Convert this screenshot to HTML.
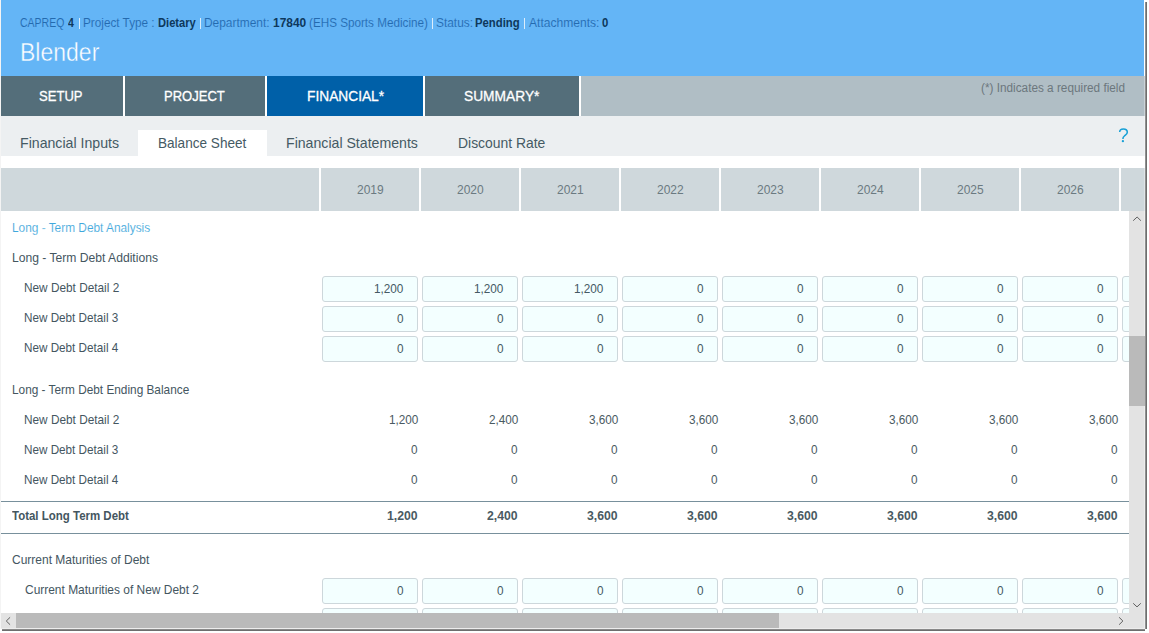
<!DOCTYPE html>
<html><head><meta charset="utf-8">
<style>
html,body{margin:0;padding:0;}
body{width:1149px;height:633px;background:#fff;position:relative;overflow:hidden;font-family:"Liberation Sans",sans-serif;}
.a{position:absolute;}
.t{position:absolute;white-space:nowrap;line-height:1;transform-origin:0 0;}
#win{position:absolute;left:1px;top:0;width:1144px;height:629px;overflow:hidden;background:#fff;}
.sep{position:absolute;top:18px;width:1px;height:11px;background:#dcedfb;}
.wg{position:absolute;top:76px;width:2px;height:40px;background:#fff;}
.hc{position:absolute;top:168px;height:43px;width:98px;background:#cfd8dc;}
.inp{position:absolute;width:94px;height:24px;border:1px solid #cdd7db;border-radius:3px;background:#f3ffff;}
</style></head>
<body>
<div class="a" style="left:0;top:0;width:1px;height:629px;background:#f4f4f4"></div>
<div class="a" style="left:1145px;top:2px;width:1px;height:627px;background:#909090"></div>
<div class="a" style="left:1146px;top:2px;width:1px;height:627px;background:#6e6e6e"></div>
<div class="a" style="left:2px;top:629px;width:1143px;height:1px;background:#8a8a8a"></div>
<div class="a" style="left:2px;top:630px;width:1143px;height:1px;background:#6e6e6e"></div>
<div id="win">
  <div class="a" style="left:0;top:0;width:1143px;height:76px;background:#64b5f6"></div>
  <div class="a" style="left:1143px;top:0;width:1px;height:76px;background:#fff"></div>
  <div class="sep" style="left:78px"></div>
  <div class="sep" style="left:199px"></div>
  <div class="sep" style="left:431px"></div>
  <div class="sep" style="left:523px"></div>
  <div class="a" style="left:0;top:76px;width:1144px;height:40px;background:#b0bec5"></div>
  <div class="a" style="left:0;top:76px;width:122px;height:40px;background:#546e7a"></div>
  <div class="a" style="left:124px;top:76px;width:140px;height:40px;background:#546e7a"></div>
  <div class="a" style="left:266px;top:76px;width:156px;height:40px;background:#0060a8"></div>
  <div class="a" style="left:424px;top:76px;width:154px;height:40px;background:#546e7a"></div>
  <div class="wg" style="left:122px"></div>
  <div class="wg" style="left:264px"></div>
  <div class="wg" style="left:422px"></div>
  <div class="wg" style="left:578px"></div>
  <div class="a" style="left:0;top:116px;width:1144px;height:40px;background:#eceff1"></div>
  <div class="a" style="left:137px;top:130px;width:129px;height:26px;background:#fff"></div>
  <div class="a" style="left:0;top:168px;width:318px;height:43px;background:#cfd8dc"></div>
  <div class="hc" style="left:320px"></div>
  <div class="hc" style="left:420px"></div>
  <div class="hc" style="left:520px"></div>
  <div class="hc" style="left:620px"></div>
  <div class="hc" style="left:720px"></div>
  <div class="hc" style="left:820px"></div>
  <div class="hc" style="left:920px"></div>
  <div class="hc" style="left:1020px"></div>
  <div class="hc" style="left:1120px"></div>
  <div id="body" class="a" style="left:0;top:0;width:1128px;height:613px;overflow:hidden">
    <div class="inp" style="left:321px;top:276px"></div>
    <div class="inp" style="left:421px;top:276px"></div>
    <div class="inp" style="left:521px;top:276px"></div>
    <div class="inp" style="left:621px;top:276px"></div>
    <div class="inp" style="left:721px;top:276px"></div>
    <div class="inp" style="left:821px;top:276px"></div>
    <div class="inp" style="left:921px;top:276px"></div>
    <div class="inp" style="left:1021px;top:276px"></div>
    <div class="inp" style="left:1121px;top:276px"></div>
    <div class="inp" style="left:321px;top:306px"></div>
    <div class="inp" style="left:421px;top:306px"></div>
    <div class="inp" style="left:521px;top:306px"></div>
    <div class="inp" style="left:621px;top:306px"></div>
    <div class="inp" style="left:721px;top:306px"></div>
    <div class="inp" style="left:821px;top:306px"></div>
    <div class="inp" style="left:921px;top:306px"></div>
    <div class="inp" style="left:1021px;top:306px"></div>
    <div class="inp" style="left:1121px;top:306px"></div>
    <div class="inp" style="left:321px;top:336px"></div>
    <div class="inp" style="left:421px;top:336px"></div>
    <div class="inp" style="left:521px;top:336px"></div>
    <div class="inp" style="left:621px;top:336px"></div>
    <div class="inp" style="left:721px;top:336px"></div>
    <div class="inp" style="left:821px;top:336px"></div>
    <div class="inp" style="left:921px;top:336px"></div>
    <div class="inp" style="left:1021px;top:336px"></div>
    <div class="inp" style="left:1121px;top:336px"></div>
    <div class="inp" style="left:321px;top:578px"></div>
    <div class="inp" style="left:421px;top:578px"></div>
    <div class="inp" style="left:521px;top:578px"></div>
    <div class="inp" style="left:621px;top:578px"></div>
    <div class="inp" style="left:721px;top:578px"></div>
    <div class="inp" style="left:821px;top:578px"></div>
    <div class="inp" style="left:921px;top:578px"></div>
    <div class="inp" style="left:1021px;top:578px"></div>
    <div class="inp" style="left:1121px;top:578px"></div>
    <div class="inp" style="left:321px;top:608px"></div>
    <div class="inp" style="left:421px;top:608px"></div>
    <div class="inp" style="left:521px;top:608px"></div>
    <div class="inp" style="left:621px;top:608px"></div>
    <div class="inp" style="left:721px;top:608px"></div>
    <div class="inp" style="left:821px;top:608px"></div>
    <div class="inp" style="left:921px;top:608px"></div>
    <div class="inp" style="left:1021px;top:608px"></div>
    <div class="inp" style="left:1121px;top:608px"></div>
    <div class="a" style="left:0;top:501px;width:1128px;height:1px;background:#78909c"></div>
    <div class="a" style="left:0;top:533px;width:1128px;height:1px;background:#78909c"></div>
<div class="t" style="left:373.06px;top:282.90px;font-size:12.5px;font-weight:400;color:#455a64;transform:scaleX(0.9400);">1,200</div>
<div class="t" style="left:473.06px;top:282.90px;font-size:12.5px;font-weight:400;color:#455a64;transform:scaleX(0.9400);">1,200</div>
<div class="t" style="left:573.06px;top:282.90px;font-size:12.5px;font-weight:400;color:#455a64;transform:scaleX(0.9400);">1,200</div>
<div class="t" style="left:695.62px;top:282.90px;font-size:12.5px;font-weight:400;color:#455a64;transform:scaleX(0.9400);">0</div>
<div class="t" style="left:795.62px;top:282.90px;font-size:12.5px;font-weight:400;color:#455a64;transform:scaleX(0.9400);">0</div>
<div class="t" style="left:895.62px;top:282.90px;font-size:12.5px;font-weight:400;color:#455a64;transform:scaleX(0.9400);">0</div>
<div class="t" style="left:995.62px;top:282.90px;font-size:12.5px;font-weight:400;color:#455a64;transform:scaleX(0.9400);">0</div>
<div class="t" style="left:1095.62px;top:282.90px;font-size:12.5px;font-weight:400;color:#455a64;transform:scaleX(0.9400);">0</div>
<div class="t" style="left:395.62px;top:312.90px;font-size:12.5px;font-weight:400;color:#455a64;transform:scaleX(0.9400);">0</div>
<div class="t" style="left:495.62px;top:312.90px;font-size:12.5px;font-weight:400;color:#455a64;transform:scaleX(0.9400);">0</div>
<div class="t" style="left:595.62px;top:312.90px;font-size:12.5px;font-weight:400;color:#455a64;transform:scaleX(0.9400);">0</div>
<div class="t" style="left:695.62px;top:312.90px;font-size:12.5px;font-weight:400;color:#455a64;transform:scaleX(0.9400);">0</div>
<div class="t" style="left:795.62px;top:312.90px;font-size:12.5px;font-weight:400;color:#455a64;transform:scaleX(0.9400);">0</div>
<div class="t" style="left:895.62px;top:312.90px;font-size:12.5px;font-weight:400;color:#455a64;transform:scaleX(0.9400);">0</div>
<div class="t" style="left:995.62px;top:312.90px;font-size:12.5px;font-weight:400;color:#455a64;transform:scaleX(0.9400);">0</div>
<div class="t" style="left:1095.62px;top:312.90px;font-size:12.5px;font-weight:400;color:#455a64;transform:scaleX(0.9400);">0</div>
<div class="t" style="left:395.62px;top:342.90px;font-size:12.5px;font-weight:400;color:#455a64;transform:scaleX(0.9400);">0</div>
<div class="t" style="left:495.62px;top:342.90px;font-size:12.5px;font-weight:400;color:#455a64;transform:scaleX(0.9400);">0</div>
<div class="t" style="left:595.62px;top:342.90px;font-size:12.5px;font-weight:400;color:#455a64;transform:scaleX(0.9400);">0</div>
<div class="t" style="left:695.62px;top:342.90px;font-size:12.5px;font-weight:400;color:#455a64;transform:scaleX(0.9400);">0</div>
<div class="t" style="left:795.62px;top:342.90px;font-size:12.5px;font-weight:400;color:#455a64;transform:scaleX(0.9400);">0</div>
<div class="t" style="left:895.62px;top:342.90px;font-size:12.5px;font-weight:400;color:#455a64;transform:scaleX(0.9400);">0</div>
<div class="t" style="left:995.62px;top:342.90px;font-size:12.5px;font-weight:400;color:#455a64;transform:scaleX(0.9400);">0</div>
<div class="t" style="left:1095.62px;top:342.90px;font-size:12.5px;font-weight:400;color:#455a64;transform:scaleX(0.9400);">0</div>
<div class="t" style="left:395.62px;top:584.90px;font-size:12.5px;font-weight:400;color:#455a64;transform:scaleX(0.9400);">0</div>
<div class="t" style="left:495.62px;top:584.90px;font-size:12.5px;font-weight:400;color:#455a64;transform:scaleX(0.9400);">0</div>
<div class="t" style="left:595.62px;top:584.90px;font-size:12.5px;font-weight:400;color:#455a64;transform:scaleX(0.9400);">0</div>
<div class="t" style="left:695.62px;top:584.90px;font-size:12.5px;font-weight:400;color:#455a64;transform:scaleX(0.9400);">0</div>
<div class="t" style="left:795.62px;top:584.90px;font-size:12.5px;font-weight:400;color:#455a64;transform:scaleX(0.9400);">0</div>
<div class="t" style="left:895.62px;top:584.90px;font-size:12.5px;font-weight:400;color:#455a64;transform:scaleX(0.9400);">0</div>
<div class="t" style="left:995.62px;top:584.90px;font-size:12.5px;font-weight:400;color:#455a64;transform:scaleX(0.9400);">0</div>
<div class="t" style="left:1095.62px;top:584.90px;font-size:12.5px;font-weight:400;color:#455a64;transform:scaleX(0.9400);">0</div>
<div class="t" style="left:387.66px;top:413.80px;font-size:12.5px;font-weight:400;color:#4a5a62;transform:scaleX(0.9400);">1,200</div>
<div class="t" style="left:487.66px;top:413.80px;font-size:12.5px;font-weight:400;color:#4a5a62;transform:scaleX(0.9400);">2,400</div>
<div class="t" style="left:587.66px;top:413.80px;font-size:12.5px;font-weight:400;color:#4a5a62;transform:scaleX(0.9400);">3,600</div>
<div class="t" style="left:687.66px;top:413.80px;font-size:12.5px;font-weight:400;color:#4a5a62;transform:scaleX(0.9400);">3,600</div>
<div class="t" style="left:787.66px;top:413.80px;font-size:12.5px;font-weight:400;color:#4a5a62;transform:scaleX(0.9400);">3,600</div>
<div class="t" style="left:887.66px;top:413.80px;font-size:12.5px;font-weight:400;color:#4a5a62;transform:scaleX(0.9400);">3,600</div>
<div class="t" style="left:987.66px;top:413.80px;font-size:12.5px;font-weight:400;color:#4a5a62;transform:scaleX(0.9400);">3,600</div>
<div class="t" style="left:1087.66px;top:413.80px;font-size:12.5px;font-weight:400;color:#4a5a62;transform:scaleX(0.9400);">3,600</div>
<div class="t" style="left:410.22px;top:443.80px;font-size:12.5px;font-weight:400;color:#4a5a62;transform:scaleX(0.9400);">0</div>
<div class="t" style="left:510.22px;top:443.80px;font-size:12.5px;font-weight:400;color:#4a5a62;transform:scaleX(0.9400);">0</div>
<div class="t" style="left:610.22px;top:443.80px;font-size:12.5px;font-weight:400;color:#4a5a62;transform:scaleX(0.9400);">0</div>
<div class="t" style="left:710.22px;top:443.80px;font-size:12.5px;font-weight:400;color:#4a5a62;transform:scaleX(0.9400);">0</div>
<div class="t" style="left:810.22px;top:443.80px;font-size:12.5px;font-weight:400;color:#4a5a62;transform:scaleX(0.9400);">0</div>
<div class="t" style="left:910.22px;top:443.80px;font-size:12.5px;font-weight:400;color:#4a5a62;transform:scaleX(0.9400);">0</div>
<div class="t" style="left:1010.22px;top:443.80px;font-size:12.5px;font-weight:400;color:#4a5a62;transform:scaleX(0.9400);">0</div>
<div class="t" style="left:1110.22px;top:443.80px;font-size:12.5px;font-weight:400;color:#4a5a62;transform:scaleX(0.9400);">0</div>
<div class="t" style="left:410.22px;top:473.80px;font-size:12.5px;font-weight:400;color:#4a5a62;transform:scaleX(0.9400);">0</div>
<div class="t" style="left:510.22px;top:473.80px;font-size:12.5px;font-weight:400;color:#4a5a62;transform:scaleX(0.9400);">0</div>
<div class="t" style="left:610.22px;top:473.80px;font-size:12.5px;font-weight:400;color:#4a5a62;transform:scaleX(0.9400);">0</div>
<div class="t" style="left:710.22px;top:473.80px;font-size:12.5px;font-weight:400;color:#4a5a62;transform:scaleX(0.9400);">0</div>
<div class="t" style="left:810.22px;top:473.80px;font-size:12.5px;font-weight:400;color:#4a5a62;transform:scaleX(0.9400);">0</div>
<div class="t" style="left:910.22px;top:473.80px;font-size:12.5px;font-weight:400;color:#4a5a62;transform:scaleX(0.9400);">0</div>
<div class="t" style="left:1010.22px;top:473.80px;font-size:12.5px;font-weight:400;color:#4a5a62;transform:scaleX(0.9400);">0</div>
<div class="t" style="left:1110.22px;top:473.80px;font-size:12.5px;font-weight:400;color:#4a5a62;transform:scaleX(0.9400);">0</div>
<div class="t" style="left:386.42px;top:509.60px;font-size:12.5px;font-weight:700;color:#4a5a62;transform:scaleX(0.9800);">1,200</div>
<div class="t" style="left:486.42px;top:509.60px;font-size:12.5px;font-weight:700;color:#4a5a62;transform:scaleX(0.9800);">2,400</div>
<div class="t" style="left:586.42px;top:509.60px;font-size:12.5px;font-weight:700;color:#4a5a62;transform:scaleX(0.9800);">3,600</div>
<div class="t" style="left:686.42px;top:509.60px;font-size:12.5px;font-weight:700;color:#4a5a62;transform:scaleX(0.9800);">3,600</div>
<div class="t" style="left:786.42px;top:509.60px;font-size:12.5px;font-weight:700;color:#4a5a62;transform:scaleX(0.9800);">3,600</div>
<div class="t" style="left:886.42px;top:509.60px;font-size:12.5px;font-weight:700;color:#4a5a62;transform:scaleX(0.9800);">3,600</div>
<div class="t" style="left:986.42px;top:509.60px;font-size:12.5px;font-weight:700;color:#4a5a62;transform:scaleX(0.9800);">3,600</div>
<div class="t" style="left:1086.42px;top:509.60px;font-size:12.5px;font-weight:700;color:#4a5a62;transform:scaleX(0.9800);">3,600</div>
  </div>
<div class="t" style="left:19.40px;top:15.90px;font-size:13px;font-weight:400;color:#246aae;transform:scaleX(0.8073);-webkit-text-stroke:0.12px #64b5f6;">CAPREQ</div>
<div class="t" style="left:67.30px;top:15.90px;font-size:13px;font-weight:700;color:#0e385c;transform:scaleX(0.8125);">4</div>
<div class="t" style="left:82.10px;top:15.90px;font-size:13px;font-weight:400;color:#246aae;transform:scaleX(0.9038);-webkit-text-stroke:0.12px #64b5f6;">Project Type :</div>
<div class="t" style="left:156.94px;top:15.90px;font-size:13px;font-weight:700;color:#0e385c;transform:scaleX(0.8558);">Dietary</div>
<div class="t" style="left:203.28px;top:15.90px;font-size:13px;font-weight:400;color:#246aae;transform:scaleX(0.9171);-webkit-text-stroke:0.12px #64b5f6;">Department:</div>
<div class="t" style="left:271.70px;top:15.90px;font-size:13px;font-weight:700;color:#0e385c;transform:scaleX(0.9167);">17840</div>
<div class="t" style="left:307.60px;top:15.90px;font-size:13px;font-weight:400;color:#246aae;transform:scaleX(0.8992);-webkit-text-stroke:0.12px #64b5f6;">(EHS Sports Medicine)</div>
<div class="t" style="left:434.58px;top:15.90px;font-size:13px;font-weight:400;color:#246aae;transform:scaleX(0.9154);-webkit-text-stroke:0.12px #64b5f6;">Status:</div>
<div class="t" style="left:473.83px;top:15.90px;font-size:13px;font-weight:700;color:#0e385c;transform:scaleX(0.8700);">Pending</div>
<div class="t" style="left:527.80px;top:15.90px;font-size:13px;font-weight:400;color:#246aae;transform:scaleX(0.9280);-webkit-text-stroke:0.12px #64b5f6;">Attachments:</div>
<div class="t" style="left:600.90px;top:15.90px;font-size:13px;font-weight:700;color:#0e385c;transform:scaleX(0.8714);">0</div>
<div class="t" style="left:18.56px;top:40.00px;font-size:25px;font-weight:400;color:#ffffff;transform:scaleX(0.9202);-webkit-text-stroke:0.4px #64b5f6;">Blender</div>
<div class="t" style="left:38.10px;top:88.90px;font-size:14.5px;font-weight:400;color:#ffffff;transform:scaleX(0.9000);-webkit-text-stroke:0.3px #fff;">SETUP</div>
<div class="t" style="left:162.60px;top:88.90px;font-size:14.5px;font-weight:400;color:#ffffff;transform:scaleX(0.8985);-webkit-text-stroke:0.3px #fff;">PROJECT</div>
<div class="t" style="left:305.55px;top:88.90px;font-size:14.5px;font-weight:400;color:#ffffff;transform:scaleX(0.9475);-webkit-text-stroke:0.3px #fff;">FINANCIAL*</div>
<div class="t" style="left:463.05px;top:88.90px;font-size:14.5px;font-weight:400;color:#ffffff;transform:scaleX(0.9487);-webkit-text-stroke:0.3px #fff;">SUMMARY*</div>
<div class="t" style="left:979.90px;top:81.80px;font-size:12px;font-weight:400;color:#6c777d;transform:scaleX(0.9815);">(*) Indicates a required field</div>
<div class="t" style="left:18.52px;top:136.00px;font-size:14.5px;font-weight:400;color:#455a64;transform:scaleX(0.9750);">Financial Inputs</div>
<div class="t" style="left:157.06px;top:136.00px;font-size:14.5px;font-weight:400;color:#455a64;transform:scaleX(0.9362);">Balance Sheet</div>
<div class="t" style="left:285.33px;top:136.00px;font-size:14.5px;font-weight:400;color:#455a64;transform:scaleX(0.9739);">Financial Statements</div>
<div class="t" style="left:456.54px;top:136.00px;font-size:14.5px;font-weight:400;color:#455a64;transform:scaleX(0.9589);">Discount Rate</div>
<div class="t" style="left:355.90px;top:183.10px;font-size:13.3px;font-weight:400;color:#6b7a81;transform:scaleX(0.9034);">2019</div>
<div class="t" style="left:10.69px;top:221.20px;font-size:13px;font-weight:400;color:#3fa8dc;transform:scaleX(0.9120);-webkit-text-stroke:0.12px #fff;">Long - Term Debt Analysis</div>
<div class="t" style="left:10.67px;top:251.10px;font-size:13px;font-weight:400;color:#44565f;transform:scaleX(0.9323);">Long - Term Debt Additions</div>
<div class="t" style="left:23.29px;top:280.90px;font-size:13px;font-weight:400;color:#44565f;transform:scaleX(0.9087);">New Debt Detail 2</div>
<div class="t" style="left:23.30px;top:310.90px;font-size:13px;font-weight:400;color:#44565f;transform:scaleX(0.9000);">New Debt Detail 3</div>
<div class="t" style="left:23.30px;top:340.90px;font-size:13px;font-weight:400;color:#44565f;transform:scaleX(0.9000);">New Debt Detail 4</div>
<div class="t" style="left:10.59px;top:382.80px;font-size:13px;font-weight:400;color:#44565f;transform:scaleX(0.9093);">Long - Term Debt Ending Balance</div>
<div class="t" style="left:23.29px;top:412.80px;font-size:13px;font-weight:400;color:#44565f;transform:scaleX(0.9087);">New Debt Detail 2</div>
<div class="t" style="left:23.30px;top:442.80px;font-size:13px;font-weight:400;color:#44565f;transform:scaleX(0.9000);">New Debt Detail 3</div>
<div class="t" style="left:23.30px;top:472.80px;font-size:13px;font-weight:400;color:#44565f;transform:scaleX(0.9000);">New Debt Detail 4</div>
<div class="t" style="left:11.20px;top:508.90px;font-size:13px;font-weight:700;color:#44565f;transform:scaleX(0.8827);">Total Long Term Debt</div>
<div class="t" style="left:11.40px;top:552.80px;font-size:13px;font-weight:400;color:#44565f;transform:scaleX(0.9228);">Current Maturities of Debt</div>
<div class="t" style="left:23.50px;top:582.80px;font-size:13px;font-weight:400;color:#44565f;transform:scaleX(0.9190);">Current Maturities of New Debt 2</div>
<div class="t" style="left:455.90px;top:183.10px;font-size:13.3px;font-weight:400;color:#6b7a81;transform:scaleX(0.9034);">2020</div>
<div class="t" style="left:555.90px;top:183.10px;font-size:13.3px;font-weight:400;color:#6b7a81;transform:scaleX(0.9034);">2021</div>
<div class="t" style="left:655.90px;top:183.10px;font-size:13.3px;font-weight:400;color:#6b7a81;transform:scaleX(0.9034);">2022</div>
<div class="t" style="left:755.90px;top:183.10px;font-size:13.3px;font-weight:400;color:#6b7a81;transform:scaleX(0.9034);">2023</div>
<div class="t" style="left:855.90px;top:183.10px;font-size:13.3px;font-weight:400;color:#6b7a81;transform:scaleX(0.9034);">2024</div>
<div class="t" style="left:955.90px;top:183.10px;font-size:13.3px;font-weight:400;color:#6b7a81;transform:scaleX(0.9034);">2025</div>
<div class="t" style="left:1055.90px;top:183.10px;font-size:13.3px;font-weight:400;color:#6b7a81;transform:scaleX(0.9034);">2026</div>
  <div class="a" style="left:1128px;top:211px;width:16px;height:402px;background:#e3e3e3"></div>
  <div class="a" style="left:0;top:613px;width:1144px;height:16px;background:#e3e3e3"></div>
  <div class="a" style="left:15px;top:613px;width:763px;height:15px;background:#bababa"></div>
  <div class="a" style="left:1143px;top:76px;width:1px;height:553px;background:rgba(255,255,255,0.35)"></div>
  <div class="a" style="left:0;top:628px;width:1143px;height:1px;background:rgba(255,255,255,0.35)"></div>
  <div class="a" style="left:1128px;top:336px;width:16px;height:70px;background:#bababa"></div>
  <svg class="a" style="left:0;top:0" width="1144" height="629" viewBox="1 0 1144 629">
    <g fill="none" stroke="#606060" stroke-width="1">
      <polyline points="1133.2,220.7 1137.1,217 1140.9,220.7"/>
      <polyline points="1133.2,603.3 1137,606.9 1140.8,603.3"/>
      <polyline points="1119.1,617.3 1122.9,621 1119.1,624.7"/>
      <polyline points="10.1,617.3 6.3,621 10.1,624.7"/>
    </g>
    <path d="M1119.7,132 C1119.7,129.6 1121.5,128.9 1123.4,128.9 C1125.6,128.9 1127.3,130.2 1127.3,132.2 C1127.3,134.2 1125.8,134.9 1124.4,136 C1123.3,136.9 1122.9,137.5 1122.9,138.9" fill="none" stroke="#18a0d6" stroke-width="1.55"/>
    <circle cx="1122.9" cy="141.2" r="1.15" fill="#18a0d6"/>
  </svg>
</div>
</body></html>
